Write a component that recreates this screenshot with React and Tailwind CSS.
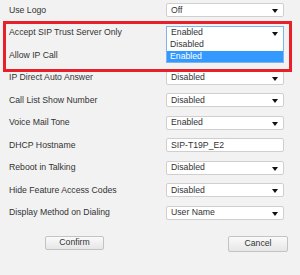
import React from "react";

const rows = [
  { label: "Use Logo", value: "Off" },
  { label: "Accept SIP Trust Server Only", value: "Enabled" },
  { label: "Allow IP Call", value: "Enabled" },
  { label: "IP Direct Auto Answer", value: "Disabled" },
  { label: "Call List Show Number", value: "Disabled" },
  { label: "Voice Mail Tone", value: "Enabled" },
  { label: "DHCP Hostname", value: "SIP-T19P_E2", input: true },
  { label: "Reboot in Talking", value: "Disabled" },
  { label: "Hide Feature Access Codes", value: "Disabled" },
  { label: "Display Method on Dialing", value: "User Name" },
];

function Arrow() {
  return (
    <svg width="6" height="5" viewBox="0 0 6 5" className="absolute right-[5px] top-[5px]">
      <path d="M0 0 L6 0 L3 4 Z" fill="#111" />
    </svg>
  );
}

export default function App() {
  return (
    <div
      className="relative w-[300px] h-[275px] bg-[#f2f2f2] text-[#333] overflow-hidden"
      style={{ fontFamily: '"Liberation Sans", Arial, sans-serif' }}
    >
      <div className="flex flex-col gap-[8.5px] pt-[3px]">
        {rows.map((r, i) => (
          <div key={i} className="flex items-center h-[14px] text-[8.7px]">
            <div className="w-[166px] pl-[9px] leading-none">{r.label}</div>
            <div
              className={
                "relative w-[118px] h-[14px] bg-white border flex items-center pl-[4px] leading-none " +
                (i === 1 ? "border-[#7eb4ea]" : "border-[#cfcfcf] rounded-[2px]")
              }
            >
              {r.value}
              {!r.input && <Arrow />}
            </div>
          </div>
        ))}
      </div>

      <div className="flex justify-between mt-[16px] pl-[45px] pr-[12px]">
        <button className="w-[59px] h-[14px] border border-[#c3c3c3] rounded-[2px] bg-gradient-to-b from-[#fafafa] to-[#e6e6e6] text-[8.7px] leading-none text-[#333]">
          Confirm
        </button>
        <button className="w-[60px] h-[16px] border border-[#c3c3c3] rounded-[2px] bg-gradient-to-b from-[#fafafa] to-[#e6e6e6] text-[8.7px] leading-none text-[#333]">
          Cancel
        </button>
      </div>

      {/* open dropdown list */}
      <div className="absolute left-[166px] top-[39px] w-[118px] h-[24px] bg-white border border-[#7eb4ea] border-t-0 flex flex-col text-[8.7px] leading-none">
        <div className="h-[12px] flex items-center pl-[3px]">Disabled</div>
        <div className="h-[12px] flex items-center pl-[3px] bg-[#3399ff] text-white">Enabled</div>
      </div>

      {/* red annotation box */}
      <div className="absolute left-[3px] top-[21px] w-[289px] h-[51px] border-[3px] border-[#e8202a]" />
    </div>
  );
}
